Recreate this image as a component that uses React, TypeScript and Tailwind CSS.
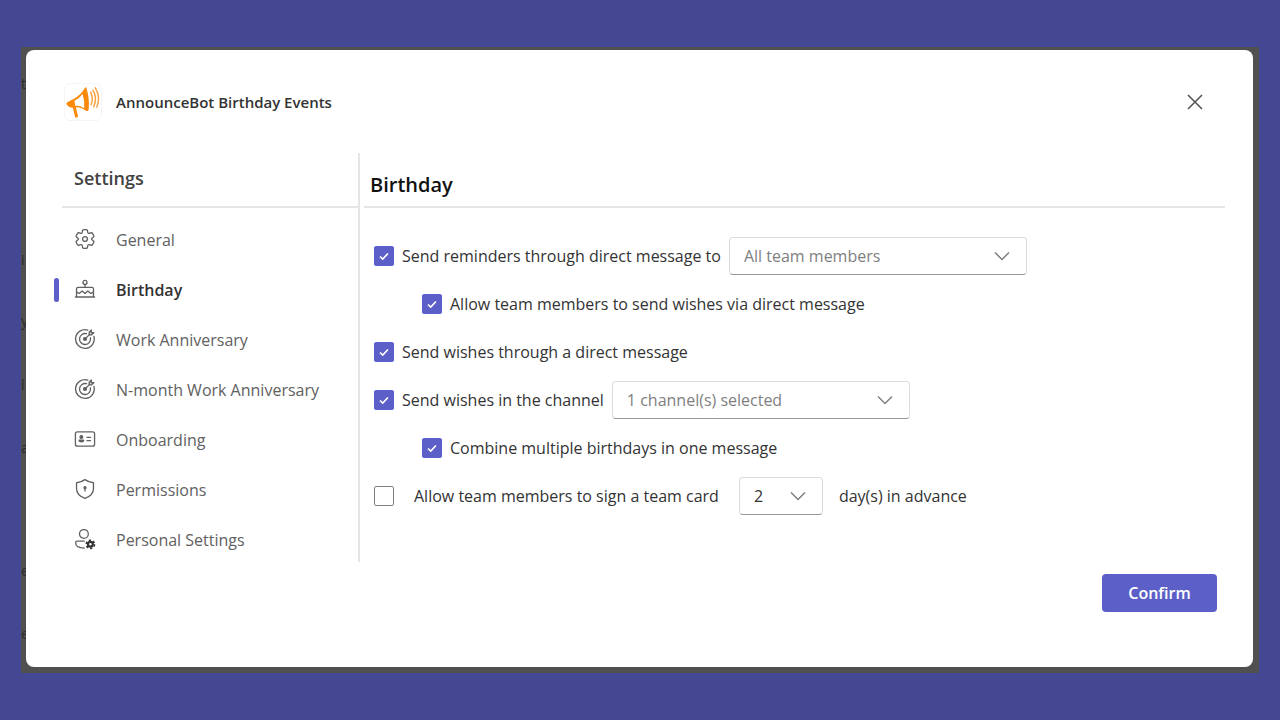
import { useId, useState, type ReactNode } from "react";

interface IconProps {
  children: ReactNode;
}

function NavIcon({ children }: IconProps) {
  return (
    <svg
      viewBox="0 0 20 20"
      className="size-[22px] shrink-0"
      fill="none"
      stroke="currentColor"
      strokeWidth="1.2"
      strokeLinecap="round"
      strokeLinejoin="round"
      aria-hidden="true"
    >
      {children}
    </svg>
  );
}

const targetIcon = (
  <NavIcon>
    <path d="M12.6 1.9A8.5 8.5 0 1 0 18.1 7.6" />
    <path d="M11.4 5.2A5 5 0 1 0 14.9 8.9" />
    <circle cx="10" cy="10" r="1.3" fill="currentColor" />
    <path d="M10 10l4-4" />
    <path d="M13.8 6.2V3.9l2-2v2.3h2.3l-2 2z" fill="currentColor" fillOpacity="0.35" />
  </NavIcon>
);

const navItems = [
  {
    id: "general",
    label: "General",
    icon: (
      <NavIcon>
        <path d="M1.91 7.38A8.5 8.5 0 0 1 3.69 4.3a.5.5 0 0 1 .54-.13l1.92.68a1 1 0 0 0 1.32-.76l.36-2a.5.5 0 0 1 .4-.4 8.53 8.53 0 0 1 3.55 0c.2.04.35.2.38.4l.37 2a1 1 0 0 0 1.32.76l1.92-.68a.5.5 0 0 1 .54.13 8.5 8.5 0 0 1 1.78 3.08c.06.2 0 .4-.15.54l-1.56 1.32a1 1 0 0 0 0 1.52l1.56 1.32a.5.5 0 0 1 .15.54 8.5 8.5 0 0 1-1.78 3.08.5.5 0 0 1-.54.13l-1.92-.68a1 1 0 0 0-1.32.76l-.37 2a.5.5 0 0 1-.38.4 8.53 8.53 0 0 1-3.56 0 .5.5 0 0 1-.39-.4l-.36-2a1 1 0 0 0-1.32-.76l-1.92.68a.5.5 0 0 1-.54-.13 8.5 8.5 0 0 1-1.78-3.08.5.5 0 0 1 .15-.54l1.56-1.32a1 1 0 0 0 0-1.52L2.06 7.92a.5.5 0 0 1-.15-.54Z" />
        <circle cx="10" cy="10" r="2.2" />
      </NavIcon>
    ),
  },
  {
    id: "birthday",
    label: "Birthday",
    icon: (
      <NavIcon>
        <circle cx="10" cy="4" r="1.8" />
        <path d="M10 6.5V8.5M1.3 17.3h17.4M2.3 17.3V10A1.5 1.5 0 0 1 3.8 8.5h12.4A1.5 1.5 0 0 1 17.7 10v7.3" />
        <path d="M2.3 12.8l2.5 1.2 2.6-2.2L10 14l2.6-2.2 2.6 2.2 2.5-1.2" />
      </NavIcon>
    ),
  },
  { id: "work", label: "Work Anniversary", icon: targetIcon },
  { id: "n-month", label: "N-month Work Anniversary", icon: targetIcon },
  {
    id: "onboarding",
    label: "Onboarding",
    icon: (
      <NavIcon>
        <rect x="1.3" y="3.5" width="17.4" height="13" rx="1.8" />
        <circle cx="6.7" cy="8.2" r="1.2" fill="currentColor" />
        <path d="M4.7 11h4v.5c0 .6-.9 1-2 1s-2-.4-2-1z" fill="currentColor" />
        <path d="M11.8 8.5h3.2M11.8 11.5h3.2" />
      </NavIcon>
    ),
  },
  {
    id: "permissions",
    label: "Permissions",
    icon: (
      <NavIcon>
        <path d="M10 1.5c2.3 1.7 4.8 2.6 7.7 2.8v5.2c0 4.3-2.9 7.3-7.7 9-4.8-1.7-7.7-4.7-7.7-9V4.3c2.9-.2 5.4-1.1 7.7-2.8z" />
        <circle cx="10" cy="8.8" r="0.9" fill="currentColor" />
        <path d="M10 9v2.8" />
      </NavIcon>
    ),
  },
  {
    id: "personal",
    label: "Personal Settings",
    icon: (
      <NavIcon>
        <circle cx="9" cy="5.4" r="4" />
        <path d="M9.3 12H3A1.5 1.5 0 0 0 1.5 13.5C1.5 16.5 4.5 18.3 9.3 18.3" />
        <g stroke="#333" strokeLinecap="butt">
          <circle cx="14.9" cy="14.8" r="2.2" strokeWidth="2" />
          <circle cx="14.9" cy="14.8" r="3.7" strokeWidth="1.5" strokeDasharray="2.1 1.775" />
        </g>
      </NavIcon>
    ),
  },
];

// letters of the dimmed page that show beside the dialog
const pageFragments = [
  { text: "t", top: "top-[27px]" },
  { text: "i", top: "top-[203px]" },
  { text: "y", top: "top-[264px]" },
  { text: "l", top: "top-[328px]" },
  { text: "a", top: "top-[391px]" },
  { text: "e", top: "top-[514px]" },
  { text: "e", top: "top-[577px]" },
];

function Logo() {
  return (
    <svg viewBox="0 0 38 38" className="size-[38px] shrink-0 rounded-md border border-[#f5f5f5]" aria-hidden="true">
      <path
        d="M21.5 3.5Q22.6 3 22.8 5Q26 15 25 27Q24.6 29 22.5 28.5Q17 24 11.5 24.5L13.8 34Q13.5 36 10.8 35.3L8.3 25Q4.5 25.5 1.8 22L1.5 20Q4.5 17.5 8.5 16Q16.5 12.5 21.5 3.5ZM18.5 10.5Q15 15.5 10 17.8L10.8 23Q15.5 22.3 20.3 25.5Q21 18 18.5 10.5Z"
        fill="#f98a0c"
        fillRule="evenodd"
      />
      <g fill="none" stroke="#f9a03c" strokeWidth="1.5" strokeLinecap="round">
        <path d="M27 8.5q3.5 6.5 .5 13.5" />
        <path d="M29.5 6.5q5 8.5 .8 17.5" />
        <path d="M32 4q6 9.5 1.5 20.5" />
      </g>
    </svg>
  );
}

interface CheckFieldProps {
  label: string;
  defaultChecked?: boolean;
  wide?: boolean;
}

function CheckField({ label, defaultChecked = false, wide = false }: CheckFieldProps) {
  const id = useId();
  const [checked, setChecked] = useState(defaultChecked);

  return (
    <div className={`flex items-center ${wide ? "gap-5" : "gap-2"}`}>
      <span className="grid shrink-0">
        <input
          id={id}
          type="checkbox"
          checked={checked}
          onChange={(e) => setChecked(e.target.checked)}
          className="col-start-1 row-start-1 size-5 appearance-none rounded-xs border border-[#808080] checked:border-[#5b5fc7] checked:bg-[#5b5fc7]"
        />
        {checked && (
          <svg viewBox="0 0 20 20" className="pointer-events-none col-start-1 row-start-1 size-5" aria-hidden="true">
            <path d="M6 10.5l2.7 2.5L14 7.5" fill="none" stroke="#fff" strokeWidth="1.7" />
          </svg>
        )}
      </span>
      <label htmlFor={id}>{label}</label>
    </div>
  );
}

interface SelectFieldProps {
  label: string;
  options: string[];
  className: string;
}

function SelectField({ label, options, className }: SelectFieldProps) {
  return (
    <div className={`grid h-[38px] items-center rounded-sm border border-[#dcdcdc] border-b-[#999] ${className}`}>
      <select aria-label={label} className="col-start-1 row-start-1 h-full w-full appearance-none bg-transparent px-3.5">
        {options.map((option) => (
          <option key={option}>{option}</option>
        ))}
      </select>
      <svg viewBox="0 0 16 10" className="pointer-events-none col-start-1 row-start-1 mr-4 h-2.5 w-4 justify-self-end" aria-hidden="true">
        <path d="M1 1.5l7 7 7-7" fill="none" stroke="#808080" strokeWidth="1.5" />
      </svg>
    </div>
  );
}

export default function App() {
  const [active, setActive] = useState("birthday");

  return (
    <div className="min-h-screen bg-[#444791] px-[21px] py-[47px] font-['Open_Sans','Segoe_UI',sans-serif] text-base leading-6 text-[#333]">
      <div className="relative bg-[#505050] pt-[3px] pr-1.5 pb-1.5 pl-[5px]">
        <div aria-hidden="true" className="text-sm text-[#2b2b2b]">
          {pageFragments.map((fragment) => (
            <span key={fragment.top} className={`absolute left-0 ${fragment.top}`}>
              {fragment.text}
            </span>
          ))}
        </div>
        <section className="relative rounded-lg bg-white pt-[33px] pr-7 pb-[55px] pl-7">
          <header className="flex items-center gap-3.5 pr-4.5 pl-2.5">
            <Logo />
            <h1 className="flex-1 text-[15px] font-semibold">AnnounceBot Birthday Events</h1>
            <button aria-label="Close" className="p-1">
              <svg viewBox="0 0 16 16" className="size-4" aria-hidden="true">
                <path d="M1 1l14 14M15 1L1 15" fill="none" stroke="#505050" strokeWidth="1.5" />
              </svg>
            </button>
          </header>

          <div className="mt-8 flex">
            <aside className="w-[306px] shrink-0 border-r-2 border-[#e6e6e6]">
              <h2 className="ml-2 border-b-2 border-[#e6e6e6] px-3 pt-[11px] pb-3.5 text-lg font-semibold text-[#424242]">Settings</h2>
              <nav className="mt-2.5 flex flex-col gap-1.5">
                {navItems.map((item) => (
                  <button
                    key={item.id}
                    onClick={() => setActive(item.id)}
                    className="flex h-11 items-center text-left text-[#616161]"
                  >
                    <span className={`h-6 w-[5px] rounded-full ${active === item.id ? "bg-[#5b5fc7]" : ""}`} />
                    <span className="ml-[15px] pb-0.5">{item.icon}</span>
                    <span className={`ml-5 ${active === item.id ? "font-semibold text-[#333]" : ""}`}>{item.label}</span>
                  </button>
                ))}
              </nav>
            </aside>

            <main className="ml-1 min-w-0 flex-1">
              <h2 className="border-b-2 border-[#e6e6e6] px-1.5 pt-[18px] pb-[7px] text-xl font-semibold text-[#111]">Birthday</h2>
              <form className="mt-6 flex flex-col px-2.5">
                <div className="flex h-12 items-center gap-2">
                  <CheckField label="Send reminders through direct message to" defaultChecked />
                  <SelectField label="Reminder recipients" options={["All team members"]} className="w-[298px] text-[#808080]" />
                </div>
                <div className="flex h-12 items-center pl-12">
                  <CheckField label="Allow team members to send wishes via direct message" defaultChecked />
                </div>
                <div className="flex h-12 items-center">
                  <CheckField label="Send wishes through a direct message" defaultChecked />
                </div>
                <div className="flex h-12 items-center gap-2">
                  <CheckField label="Send wishes in the channel" defaultChecked />
                  <SelectField label="Channels" options={["1 channel(s) selected"]} className="w-[298px] text-[#808080]" />
                </div>
                <div className="flex h-12 items-center pl-12">
                  <CheckField label="Combine multiple birthdays in one message" defaultChecked />
                </div>
                <div className="flex h-12 items-center gap-5">
                  <CheckField label="Allow team members to sign a team card" wide />
                  <div className="flex items-center gap-4">
                    <SelectField label="Days in advance" options={["2", "3", "4"]} className="w-[84px]" />
                    <span>day(s) in advance</span>
                  </div>
                </div>
              </form>
            </main>
          </div>

          <footer className="mt-3 flex justify-end pr-2">
            <button className="h-[38px] w-[115px] rounded-sm bg-[#5b5fc7] font-semibold text-white">Confirm</button>
          </footer>
        </section>
      </div>
    </div>
  );
}
